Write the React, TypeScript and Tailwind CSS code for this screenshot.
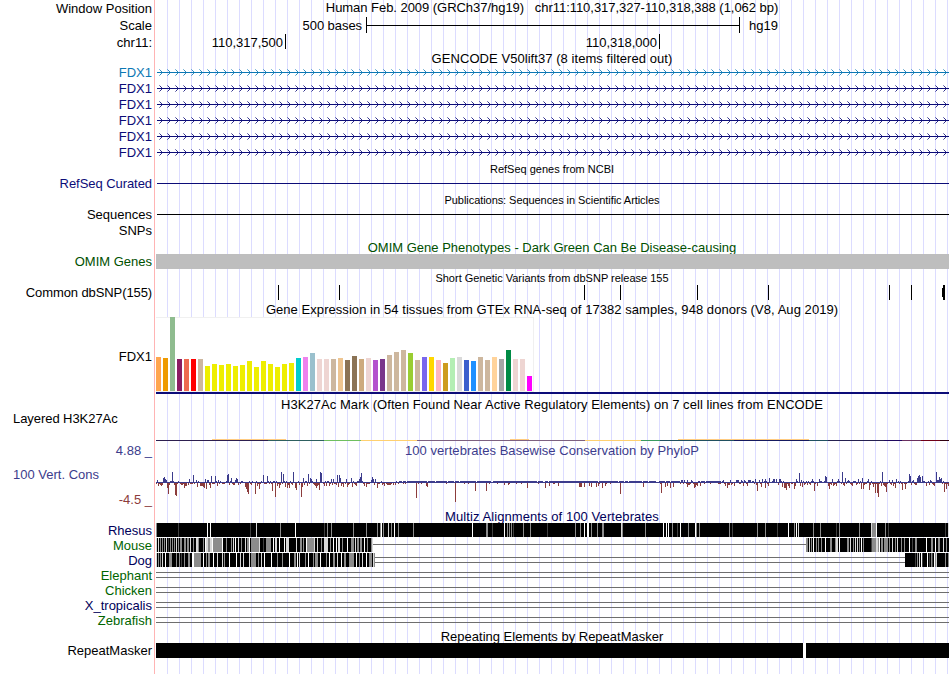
import type { ReactNode } from "react";

// Left edge of the data area and its width, in page pixels
const LEFT = 156;
const WIDTH = 793;

interface TrackProps {
  label?: string;
  labelClass?: string;
  height: string;
  children?: ReactNode;
}

function Track({ label, labelClass = "text-black", height, children }: TrackProps) {
  return (
    <div className={`flex w-full items-center ${height}`}>
      <div className={`w-[152px] shrink-0 text-right ${labelClass}`}>{label}</div>
      <div className="ml-1 h-full w-[793px] shrink-0">{children}</div>
    </div>
  );
}

interface TitleProps {
  text: string;
  height: string;
  className?: string;
}

function Title({ text, height, className = "text-black" }: TitleProps) {
  return (
    <div className={`ml-[156px] flex w-[792px] items-center justify-center ${height} ${className}`}>
      {text}
    </div>
  );
}

function Plot({ height, children }: { height: number; children: ReactNode }) {
  return (
    <svg
      className="block"
      width={WIDTH}
      height={height}
      viewBox={`${LEFT} 0 ${WIDTH} ${height}`}
      shapeRendering="crispEdges"
    >
      {children}
    </svg>
  );
}

// Strand arrows, one every 8px, stepped pixel by pixel
const arrowXs = Array.from({ length: 99 }, (_, i) => 159 + i * 8);
const arrowTips = arrowXs
  .map((x) => `M${x} 5h1v1h-1zM${x} 11h1v1h-1z`)
  .join("");
const arrowBodies = arrowXs
  .map((x) => `M${x + 1} 6h1v1h-1zM${x + 2} 7h1v1h-1zM${x + 2} 9h1v1h-1zM${x + 1} 10h1v1h-1z`)
  .join("");

function GeneLine({ color }: { color: string }) {
  return (
    <Plot height={16}>
      <path d={arrowTips} fill={color} opacity={0.5} />
      <path d={arrowBodies} fill={color} opacity={0.85} />
      <rect x={157} y={8} width={792} height={1} fill={color} />
    </Plot>
  );
}

const variants = [278, 339, 584, 620, 697, 768, 889, 911];

const tissues: [number, string][] = [
  [34, "#ffa54f"], [33, "#ee9a00"], [74, "#8fbc8f"], [32, "#8b1c62"], [32, "#ee6a50"], [32, "#ff0000"],
  [32, "#cdb79e"], [25, "#eeee00"], [27, "#eeee00"], [26, "#eeee00"], [27, "#eeee00"], [25, "#eeee00"],
  [26, "#eeee00"], [30, "#eeee00"], [24, "#eeee00"], [30, "#eeee00"], [27, "#eeee00"], [24, "#eeee00"],
  [27, "#eeee00"], [28, "#eeee00"], [33, "#00cdcd"], [34, "#ee82ee"], [38, "#9ac0cd"], [32, "#eed5d2"],
  [32, "#eed5d2"], [32, "#cdb79e"], [33, "#eec591"], [31, "#8b7355"], [35, "#8b7355"], [32, "#cdaa7d"],
  [33, "#eed5d2"], [31, "#b452cd"], [32, "#7a378b"], [36, "#cdb79e"], [39, "#cdb79e"], [41, "#cdb79e"],
  [38, "#9acd32"], [31, "#cdb79e"], [34, "#7a67ee"], [34, "#ffd700"], [31, "#ffb6c1"], [28, "#cd9b1d"],
  [33, "#b4eeb4"], [34, "#d9d9d9"], [31, "#3a5fcd"], [30, "#1e90ff"], [34, "#cdb79e"], [31, "#cdb79e"],
  [34, "#ffd39b"], [32, "#a6a6a6"], [41, "#008b45"], [32, "#eed5d2"], [32, "#eed5d2"], [15, "#ff00ff"],
];

// [start, end, color] of the histone signal floor
const h3k27ac: [number, number, string][] = [
  [156, 268, "#2d1f4f"], [268, 324, "#2e6060"], [324, 361, "#6fbf60"], [361, 417, "#ffd070"],
  [417, 585, "#7d6080"], [585, 641, "#ffd070"], [641, 660, "#3a9a60"], [660, 734, "#205060"],
  [734, 809, "#151a60"], [809, 828, "#205060"], [828, 884, "#252050"], [884, 902, "#200860"],
  [902, 921, "#6a3060"], [921, 940, "#700018"], [940, 949, "#300010"],
];
const h3k27acUpper: [number, number][] = [[212, 286], [510, 529], [678, 809]];

// Conservation score per pixel column: x -> height
const scoreUp: [number, number][] = [
  [157, 3], [163, 5], [164, 6], [165, 4], [166, 3], [172, 11], [189, 4], [193, 8], [196, 3], [205, 4], [207, 3],
  [208, 3], [211, 7], [215, 7], [218, 3], [227, 8], [228, 9], [231, 5], [235, 3], [236, 5], [237, 4], [263, 8],
  [267, 7], [281, 11], [283, 9], [293, 11], [303, 5], [308, 9], [310, 5], [311, 4], [316, 4], [320, 11], [321, 10],
  [331, 4], [333, 4], [337, 8], [339, 8], [340, 5], [346, 4], [351, 5], [359, 4], [360, 6], [361, 10], [371, 3],
  [372, 6], [373, 4], [375, 4], [681, 3], [682, 3], [684, 3], [687, 3], [691, 3], [723, 3], [730, 3], [736, 3],
  [737, 3], [738, 3], [741, 3], [744, 3], [748, 3], [749, 3], [750, 3], [755, 4], [759, 3], [762, 4], [765, 4],
  [769, 5], [773, 4], [774, 4], [776, 4], [779, 4], [780, 4], [796, 4], [799, 10], [801, 3], [812, 4], [819, 4],
  [825, 7], [826, 6], [832, 4], [838, 4], [842, 11], [845, 5], [848, 3], [858, 4], [862, 5], [868, 4], [882, 11],
  [889, 3], [892, 3], [896, 4], [909, 9], [910, 7], [913, 3], [917, 5], [918, 7], [919, 8], [920, 6], [922, 7],
  [930, 3], [936, 11], [937, 3], [938, 3], [939, 6], [940, 4], [941, 5],
];
const scoreDown: [number, number][] = [
  [158, 3], [161, 3], [167, 5], [168, 11], [175, 12], [176, 13], [184, 5], [185, 3], [186, 3], [197, 4], [200, 3],
  [201, 3], [203, 4], [204, 5], [206, 6], [210, 5], [217, 3], [245, 4], [246, 6], [247, 9], [248, 11], [255, 11],
  [259, 6], [272, 8], [275, 14], [279, 5], [285, 4], [287, 5], [289, 5], [295, 5], [296, 7], [301, 14], [302, 4],
  [316, 5], [319, 7], [326, 3], [338, 4], [343, 4], [347, 4], [352, 4], [366, 4], [377, 5], [416, 15], [426, 3],
  [427, 4], [455, 19], [475, 8], [486, 8], [504, 2], [508, 2], [527, 5], [545, 5], [549, 3], [558, 3], [579, 4],
  [580, 4], [581, 4], [584, 4], [589, 3], [591, 4], [596, 4], [598, 3], [602, 5], [605, 3], [620, 11], [643, 4],
  [661, 10], [665, 4], [667, 3], [670, 5], [673, 4], [687, 4], [694, 5], [695, 4], [697, 3], [727, 5], [734, 3],
  [757, 8], [761, 4], [765, 5], [768, 3], [782, 4], [784, 5], [785, 5], [786, 7], [789, 5], [794, 6], [802, 4],
  [814, 8], [828, 3], [829, 6], [836, 3], [844, 3], [852, 3], [861, 6], [863, 6], [869, 7], [873, 4], [875, 10],
  [877, 10], [878, 14], [881, 3], [885, 4], [886, 9], [893, 3], [895, 5], [902, 7], [905, 6], [926, 3], [934, 3],
  [944, 9], [946, 6], [948, 3],
];

function Conservation() {
  const up = new Map(scoreUp);
  const down = new Map(scoreDown);
  let blue = "";
  let red = "";
  for (let x = LEFT; x < LEFT + WIDTH; x++) {
    const n = (x * 7919 + ((x * x) % 31) * 17) % 11;
    const flat = (x > 398 && x < 680) || (x > 700 && x < 721);
    const u = up.get(x) ?? (flat ? (n === 0 ? 1 : 2) : down.has(x) ? 1 : n > 7 ? 2 : 1);
    const d = down.get(x) ?? (flat ? (n === 4 ? 1 : 0) : up.has(x) ? 0 : n < 1 ? 3 : n < 3 ? 2 : n < 6 ? 1 : 0);
    blue += `M${x} 25v-${u}h1v${u}z`;
    if (d) red += `M${x} 25v${d}h1v-${d}z`;
  }
  return (
    <Plot height={50}>
      <path d={blue} fill="#3c3c8c" />
      <path d={red} fill="#8c3c3c" />
    </Plot>
  );
}

// Alignment shading
const shades: Record<string, string> = { d: "#404040", g: "#8c8c8c", l: "#d8d8d8", w: "#ffffff" };

// [x, width, shade] of the columns that are not fully conserved
type Run = [number, number, string];

const rhesus: Run[] = [
  [156, 1, "g"], [178, 1, "d"], [207, 1, "w"], [210, 1, "w"], [250, 1, "d"], [256, 1, "l"], [280, 1, "g"],
  [295, 1, "w"], [324, 1, "d"], [327, 1, "g"], [331, 1, "g"], [353, 1, "g"], [366, 1, "g"], [377, 1, "g"],
  [380, 1, "g"], [381, 1, "w"], [383, 1, "g"], [388, 1, "l"], [391, 1, "g"], [394, 1, "w"], [398, 1, "g"],
  [413, 1, "g"], [472, 1, "w"], [486, 2, "g"], [492, 1, "d"], [504, 1, "w"], [507, 1, "g"], [509, 1, "g"],
  [511, 1, "g"], [513, 1, "d"], [523, 1, "g"], [530, 1, "g"], [547, 1, "d"], [575, 1, "g"], [580, 1, "g"],
  [584, 1, "w"], [587, 2, "w"], [591, 1, "g"], [597, 1, "g"], [602, 2, "g"], [621, 1, "l"], [622, 1, "g"],
  [645, 1, "g"], [663, 1, "w"], [666, 1, "w"], [668, 1, "w"], [672, 1, "g"], [677, 1, "d"], [680, 1, "w"],
  [688, 1, "g"], [695, 1, "w"], [696, 1, "g"], [699, 1, "g"], [729, 1, "g"], [732, 1, "d"], [757, 1, "g"],
  [765, 1, "g"], [777, 1, "d"], [788, 1, "w"], [794, 1, "g"], [796, 1, "w"], [798, 1, "l"], [813, 1, "g"],
  [820, 1, "g"], [836, 1, "d"], [839, 1, "g"], [859, 1, "g"], [871, 1, "l"], [872, 4, "g"], [876, 1, "w"],
  [885, 1, "g"], [888, 1, "d"], [945, 1, "d"], [948, 1, "l"],
];

const mouse: Run[] = [
  [156, 1, "l"], [158, 1, "l"], [160, 1, "g"], [162, 1, "g"], [164, 1, "g"], [166, 1, "l"], [168, 1, "d"],
  [170, 1, "g"], [172, 1, "g"], [174, 1, "g"], [176, 1, "l"], [178, 1, "g"], [180, 2, "g"], [184, 2, "g"],
  [187, 2, "g"], [190, 1, "l"], [193, 1, "g"], [196, 2, "l"], [198, 1, "g"], [203, 1, "g"], [205, 1, "w"],
  [206, 2, "l"], [208, 2, "g"], [210, 2, "l"], [212, 1, "w"], [213, 9, "g"], [222, 1, "w"], [226, 1, "g"],
  [231, 1, "g"], [233, 1, "l"], [235, 1, "w"], [238, 1, "l"], [241, 1, "g"], [245, 1, "l"], [247, 2, "g"],
  [249, 1, "w"], [251, 8, "g"], [259, 1, "l"], [263, 1, "d"], [266, 5, "g"], [273, 1, "w"], [275, 2, "l"],
  [279, 1, "w"], [284, 1, "w"], [286, 3, "l"], [296, 1, "l"], [300, 2, "g"], [303, 1, "g"], [306, 1, "w"],
  [307, 7, "g"], [314, 1, "l"], [317, 1, "l"], [321, 1, "g"], [324, 4, "l"], [330, 1, "g"], [333, 1, "w"],
  [336, 1, "w"], [338, 2, "l"], [342, 1, "g"], [347, 1, "w"], [351, 3, "g"], [355, 1, "l"], [357, 2, "g"],
  [360, 2, "g"], [364, 1, "w"], [367, 1, "g"], [371, 1, "g"], [372, 1, "l"],
  [806, 2, "g"], [809, 1, "l"], [811, 1, "g"], [813, 1, "w"], [816, 1, "g"], [818, 1, "g"], [821, 1, "g"],
  [825, 1, "w"], [830, 2, "g"], [835, 1, "g"], [836, 2, "l"], [839, 1, "w"], [847, 2, "g"], [850, 1, "l"],
  [853, 1, "g"], [855, 1, "l"], [857, 1, "l"], [859, 1, "g"], [861, 1, "w"], [863, 1, "g"], [871, 1, "d"],
  [872, 4, "g"], [876, 2, "l"], [878, 1, "g"], [879, 1, "w"], [881, 2, "g"], [884, 4, "g"], [889, 1, "g"],
  [892, 1, "l"], [895, 1, "g"], [897, 1, "l"], [901, 1, "g"], [904, 1, "g"], [909, 1, "w"], [912, 1, "d"],
  [915, 2, "g"], [926, 1, "w"], [931, 2, "g"], [935, 1, "w"], [938, 2, "g"], [943, 1, "l"], [946, 1, "g"],
];

const dog: Run[] = [
  [156, 1, "l"], [158, 1, "g"], [160, 1, "g"], [162, 1, "l"], [165, 1, "w"], [169, 3, "g"], [176, 1, "g"],
  [179, 1, "g"], [181, 1, "d"], [184, 1, "g"], [188, 2, "g"], [192, 2, "w"], [194, 7, "g"], [203, 1, "w"],
  [206, 1, "g"], [208, 2, "g"], [213, 1, "w"], [217, 1, "l"], [222, 1, "l"], [224, 1, "g"], [229, 1, "w"],
  [236, 1, "w"], [240, 1, "l"], [243, 1, "l"], [249, 1, "l"], [251, 5, "g"], [258, 1, "g"], [261, 1, "l"],
  [264, 1, "w"], [271, 1, "w"], [277, 1, "g"], [282, 1, "g"], [289, 1, "w"], [294, 2, "g"], [297, 1, "w"],
  [299, 1, "l"], [305, 1, "g"], [308, 1, "w"], [313, 1, "g"], [315, 3, "g"], [320, 1, "w"], [326, 1, "g"],
  [329, 1, "w"], [333, 2, "g"], [337, 1, "l"], [341, 1, "w"], [344, 2, "g"], [349, 5, "g"], [356, 1, "w"],
  [359, 1, "g"], [362, 1, "l"], [366, 1, "w"], [369, 3, "g"], [373, 1, "l"], [374, 1, "g"],
  [915, 1, "d"], [917, 1, "g"], [919, 1, "l"], [921, 1, "w"], [922, 1, "d"], [927, 1, "w"], [929, 1, "d"],
  [931, 1, "g"], [932, 1, "d"], [934, 1, "w"], [935, 1, "g"], [936, 1, "l"], [945, 1, "g"], [948, 1, "g"],
];

interface StripesProps {
  blocks: [number, number][];
  runs: Run[];
}

function Stripes({ blocks, runs }: StripesProps) {
  return (
    <>
      {blocks.map(([start, end]) => (
        <rect key={start} x={start} y={0} width={end - start} height={14} fill="#000000" />
      ))}
      {runs.map(([x, w, shade]) => (
        <rect key={x} x={x} y={0} width={w} height={14} fill={shades[shade]} />
      ))}
    </>
  );
}

function GapLines({ start, end }: { start: number; end: number }) {
  return (
    <>
      <rect x={start} y={4} width={end - start} height={1} fill="#6e6e6e" />
      <rect x={start} y={9} width={end - start} height={1} fill="#6e6e6e" />
    </>
  );
}

const unaligned = [
  { name: "Elephant", color: "text-[#006400]" },
  { name: "Chicken", color: "text-[#006400]" },
  { name: "X_tropicalis", color: "text-[#00005a]" },
  { name: "Zebrafish", color: "text-[#006400]" },
];

export default function App() {
  return (
    <div className="relative h-[674px] w-[950px] overflow-hidden bg-white font-['Liberation_Sans',Arial,sans-serif] text-[13px] leading-[15px] whitespace-pre text-black">
      {/* Guidelines */}
      <div className="absolute inset-y-0 left-[154px] w-px bg-[#ffb4b4]" />
      <div className="absolute inset-y-0 left-[167px] w-[782px] bg-[linear-gradient(to_right,#dcdcff_1px,transparent_1px)] bg-size-[12px_100%]" />

      <div className="relative flex flex-col">
        {/* Ruler */}
        <Track label="Window Position" height="h-[17px]">
          <div className="w-[792px] text-center leading-4 tracking-[-0.04px]">
            {"Human Feb. 2009 (GRCh37/hg19)   chr11:110,317,327-110,318,388 (1,062 bp)"}
          </div>
        </Track>
        <Track label="Scale" height="h-[17px]">
          <div className="flex h-full items-start">
            <span className="w-[206px] pt-px text-right tracking-[-0.06px]">500 bases</span>
            <div className="ml-1 flex h-4 w-[374px] items-center border-x border-black">
              <div className="h-px w-full bg-black" />
            </div>
            <span className="ml-[9px] pt-px">hg19</span>
          </div>
        </Track>
        <Track label="chr11:" height="h-4">
          <div className="flex h-full items-start leading-[17px]">
            <span className="w-[127px] text-right">110,317,500</span>
            <div className="ml-[2px] h-[15px] w-px bg-black" />
            <span className="w-[371px] text-right">110,318,000</span>
            <div className="ml-[2px] h-[15px] w-px bg-black" />
          </div>
        </Track>

        {/* Genes */}
        <Title
          text="GENCODE V50lift37 (8 items filtered out)"
          height="h-[14px]"
          className="pt-[2px] tracking-[0.06px]"
        />
        <Track label="FDX1" labelClass="text-[#0c78b4]" height="h-4">
          <GeneLine color="#0c78b4" />
        </Track>
        {[1, 2, 3, 4, 5].map((n) => (
          <Track key={n} label="FDX1" labelClass="text-[#0c0c78]" height="h-4">
            <GeneLine color="#0c0c78" />
          </Track>
        ))}
        <Title text="RefSeq genes from NCBI" height="h-[15px]" className="pt-[3px] text-[11px]" />
        <Track label="RefSeq Curated" labelClass="text-[#0c0c78] tracking-[-0.06px]" height="h-4">
          <Plot height={16}>
            <rect x={157} y={8} width={792} height={1} fill="#0c0c78" />
          </Plot>
        </Track>
        <Title
          text="Publications: Sequences in Scientific Articles"
          height="h-[15px]"
          className="pt-[3px] text-[11px] tracking-[-0.06px]"
        />
        <Track label="Sequences" height="h-4">
          <Plot height={16}>
            <rect x={157} y={8} width={792} height={1} fill="#000000" />
          </Plot>
        </Track>
        <Track label="SNPs" height="h-4" />

        {/* Phenotypes and variants */}
        <Title
          text="OMIM Gene Phenotypes - Dark Green Can Be Disease-causing"
          height="h-4"
          className="pt-[2px] text-[#005000]"
        />
        <Track label="OMIM Genes" labelClass="text-[#005000]" height="h-[15px]">
          <div className="h-full bg-[#bebebe]" />
        </Track>
        <Title text="Short Genetic Variants from dbSNP release 155" height="h-4" className="pt-[2px] text-[11px]" />
        <Track label="Common dbSNP(155)" labelClass="tracking-[-0.1px]" height="h-[15px]">
          <Plot height={15}>
            {variants.map((x) => (
              <rect key={x} x={x} y={0} width={1} height={15} fill="#000000" />
            ))}
            <rect x={942} y={3} width={1} height={9} fill="#000000" />
            <rect x={943} y={0} width={2} height={15} fill="#000000" />
          </Plot>
        </Track>

        {/* Expression */}
        <Title
          text="Gene Expression in 54 tissues from GTEx RNA-seq of 17382 samples, 948 donors (V8, Aug 2019)"
          height="h-[17px]"
          className="pt-px tracking-[0.055px]"
        />
        <Track label="FDX1" labelClass="pt-[2px]" height="h-[77px]">
          <div className="flex h-[75px] w-[378px] items-end gap-[2px] border border-l-0 border-[#f0f0f0] bg-white">
            {tissues.map(([h, color], i) => (
              <div key={i} className="w-[5px] shrink-0" style={{ height: h, background: color }} />
            ))}
          </div>
          <div className="h-[2px] bg-[#0c0c78]" />
        </Track>

        {/* Regulation */}
        <Title
          text="H3K27Ac Mark (Often Found Near Active Regulatory Elements) on 7 cell lines from ENCODE"
          height="h-[17px]"
          className="pt-[4px] tracking-[0.05px]"
        />
        <div className="flex h-[31px]">
          <div className="w-[156px] shrink-0 pl-[13px] tracking-[-0.06px]">Layered H3K27Ac</div>
          <Plot height={31}>
            {h3k27ac.map(([a, b, color]) => (
              <rect key={a} x={a} y={29} width={b - a} height={1} fill={color} />
            ))}
            {h3k27acUpper.map(([a, b]) => (
              <rect key={a} x={a} y={28} width={b - a} height={1} fill="#ffcb80" />
            ))}
          </Plot>
        </div>

        {/* Conservation */}
        <Track label="4.88 _" labelClass="text-[#3c3c8c]" height="h-4">
          <div className="w-[792px] pt-px text-center tracking-[0.04px] text-[#3c3c8c]">
            100 vertebrates Basewise Conservation by PhyloP
          </div>
        </Track>
        <div className="flex h-[50px]">
          <div className="flex w-[152px] shrink-0 flex-col justify-between">
            <span className="pt-[9px] pl-[13px] text-[#3c3c8c]">100 Vert. Cons</span>
            <span className="pb-px text-right text-[#8c3c3c]">-4.5 _</span>
          </div>
          <div className="ml-1">
            <Conservation />
          </div>
        </div>
        <Title
          text="Multiz Alignments of 100 Vertebrates"
          height="h-[15px]"
          className="pt-[2px] tracking-[0.08px] text-[#00005a]"
        />
        <Track label="Rhesus" labelClass="text-[#00005a]" height="h-[15px]">
          <Plot height={15}>
            <Stripes blocks={[[156, 949]]} runs={rhesus} />
          </Plot>
        </Track>
        <Track label="Mouse" labelClass="text-[#006400]" height="h-[15px]">
          <Plot height={15}>
            <Stripes blocks={[[156, 373], [806, 949]]} runs={mouse} />
            <rect x={373} y={6} width={433} height={1} fill="#6e6e6e" />
          </Plot>
        </Track>
        <Track label="Dog" labelClass="text-[#00005a]" height="h-[15px]">
          <Plot height={15}>
            <Stripes blocks={[[156, 375], [905, 949]]} runs={dog} />
            <GapLines start={375} end={905} />
          </Plot>
        </Track>
        {unaligned.map((s) => (
          <Track key={s.name} label={s.name} labelClass={s.color} height="h-[15px]">
            <Plot height={15}>
              <GapLines start={156} end={949} />
            </Plot>
          </Track>
        ))}

        {/* Repeats */}
        <Title text="Repeating Elements by RepeatMasker" height="h-[15px]" className="pt-[2px]" />
        <Track label="RepeatMasker" height="h-[15px]">
          <div className="flex h-full justify-between">
            <div className="w-[647px] bg-black" />
            <div className="w-[3px] bg-white" />
            <div className="w-[143px] bg-black" />
          </div>
        </Track>
      </div>
    </div>
  );
}
